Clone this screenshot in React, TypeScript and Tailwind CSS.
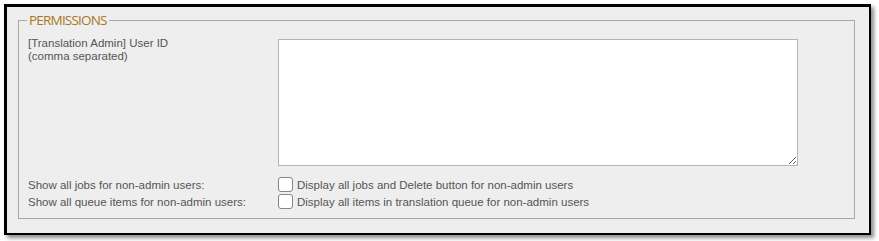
import React from "react";

const labelFont = { fontFamily: '"Liberation Sans", Arial, sans-serif' };

function CheckRow({ label, text }: { label: string; text: string }) {
  return (
    <div className="flex h-[17px] items-center">
      <div className="w-[250px] shrink-0 text-[11.5px] leading-[14px] text-[#555]">{label}</div>
      <input
        type="checkbox"
        className="m-0 h-[15px] w-[15px] shrink-0 appearance-none rounded-[3px] border border-[#858585] bg-white"
      />
      <span className="ml-[4px] text-[11.5px] leading-[14px] text-[#555]">{text}</span>
    </div>
  );
}

export default function App() {
  return (
    <div className="h-[241px] w-[879px] bg-white pl-[4px] pt-[4px]">
      <div
        className="h-[231px] w-[867px] border-[3px] border-r-[2px] border-b-[2px] border-black bg-[#eeeeee] pl-[11px] pt-[5px] shadow-[3px_3px_4px_rgba(0,0,0,0.45)]"
        style={labelFont}
      >
        <fieldset className="h-[207px] w-[837px] border border-[#a8a8a8] pl-[9px]">
          <legend
            className="ml-[-1px] px-[2px] text-[13.5px] leading-[17px] tracking-[-0.8px] text-[#a8781a]"
            style={{ fontFamily: '"Open Sans", sans-serif' }}
          >
            PERMISSIONS
          </legend>
          <div className="mt-[8px] flex items-start">
            <div className="w-[250px] shrink-0 text-[11.5px] leading-[13px] text-[#555]">
              [Translation Admin] User ID
              <br />
              (comma separated)
            </div>
            <textarea className="mt-[2px] h-[127px] w-[520px] border border-[#b4b4b4] bg-white" />
          </div>
          <div className="mt-[10px] flex flex-col">
            <CheckRow
              label="Show all jobs for non-admin users:"
              text="Display all jobs and Delete button for non-admin users"
            />
            <CheckRow
              label="Show all queue items for non-admin users:"
              text="Display all items in translation queue for non-admin users"
            />
          </div>
        </fieldset>
      </div>
    </div>
  );
}
